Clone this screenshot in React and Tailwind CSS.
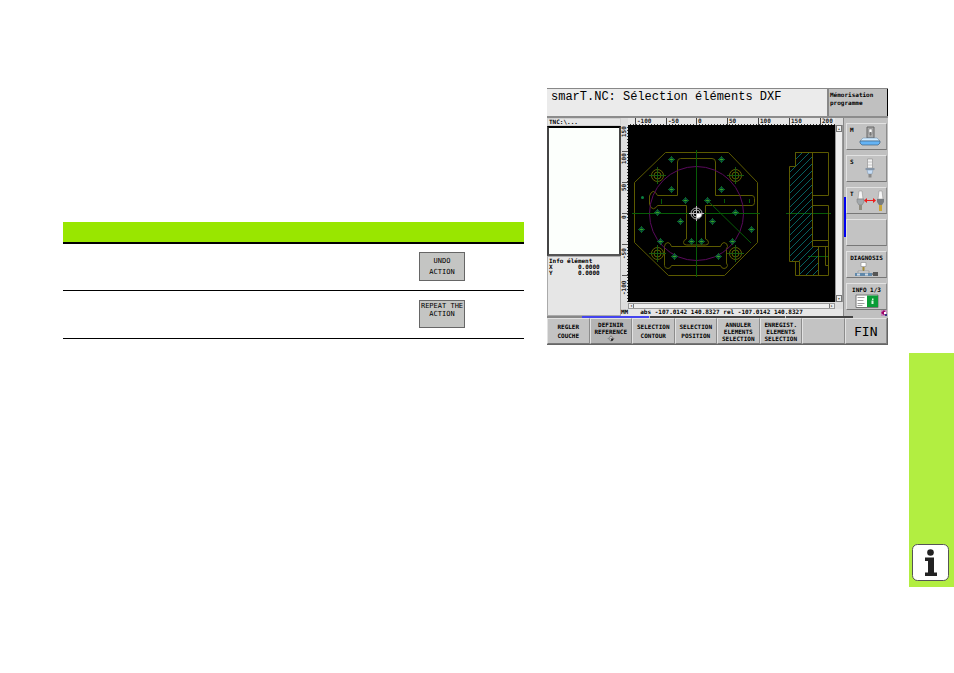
import React from 'react';
import clsx from 'clsx';

// --- Data ---

const SOFTKEYS = [
  { lines: ['REGLER', 'COUCHE'] },
  { lines: ['DEFINIR', 'REFERENCE'], icon: true, active: true },
  { lines: ['SELECTION', 'CONTOUR'] },
  { lines: ['SELECTION', 'POSITION'] },
  { lines: ['ANNULER', 'ELEMENTS', 'SELECTION'] },
  { lines: ['ENREGIST.', 'ELEMENTS', 'SELECTION'] },
  { lines: [] },
  { lines: ['FIN'], large: true },
];

const HOLES = [
  [671, 159], [721, 159], [671, 189], [721, 189], [685, 200], [707, 200],
  [657, 212], [735, 212], [680, 221], [712, 221], [641, 229], [751, 229],
  [660, 241], [732, 241], [691, 241], [701, 241], [674, 256], [718, 256],
];

const BORES = [[657, 175], [735, 175], [657, 253], [735, 253]];

const H_LABELS = [[636, '-100'], [667, '-50'], [697, '0'], [728, '50'], [759, '100'], [790, '150'], [821, '200']];
const V_LABELS = [[137, '150'], [164, '100'], [191, '50'], [219, '0'], [259, '-50'], [295, '-100']];

const range = (start, end, step) => {
  const list = [];
  for (let n = start; n < end; n += step) list.push(n);
  return list;
};

// --- Drawing ---

const HorizontalRuler = () => (
  <svg viewBox="628 118 207 7" className="block h-[7px] min-w-0 flex-1 bg-[#e6e6e6]" preserveAspectRatio="none">
    {range(630, 835, 3).map((x) => (
      <path key={x} d={`M${x}.5 124v1`} stroke="#333" />
    ))}
    {H_LABELS.map(([x, label]) => (
      <g key={label}>
        <path d={`M${x - 1}.5 118v7`} stroke="#444" />
        <text x={x + 1} y="123" fontSize="6" fontWeight="bold" fill="#222" fontFamily="DejaVu Sans Mono, monospace">{label}</text>
      </g>
    ))}
  </svg>
);

const VerticalRuler = () => (
  <svg viewBox="621 125 7 177" className="block w-[7px] shrink-0 bg-[#e0e0e0]" preserveAspectRatio="none">
    {range(127, 302, 3).map((y) => (
      <path key={y} d={`M627 ${y}.5h1`} stroke="#333" />
    ))}
    {[151, 182, 213, 244, 275].map((y) => (
      <path key={y} d={`M622 ${y}.5h6`} stroke="#555" />
    ))}
    {V_LABELS.map(([y, label]) => (
      <text key={label} transform={`translate(626 ${y}) rotate(-90)`} fontSize="6" fontWeight="bold" fill="#222" fontFamily="DejaVu Sans Mono, monospace">{label}</text>
    ))}
  </svg>
);

const Drawing = () => (
  <svg viewBox="628 125 207 177" className="block min-w-0 flex-1 bg-black" fill="none">
    <defs>
      <clipPath id="section">
        <path d="M795 152h17v94h6v29h-19v-14h-10v-95h6z" />
      </clipPath>
    </defs>

    {/* plate outline */}
    <g stroke="#5c5a00">
      <path d="M665.500 152.500H728.500L757.500 182.500V242.500L724.500 275.500H668.500L634.500 242.500V182.500Z" />
      <path d="M677.500 195.500V162q0-3.500 3-3.500h31.500q3.500 0 3.500 3.500v33.500h36.500q2.500 0 2.500 3v4q0 3-2.500 3h-46.500v33.500q3 1 3 3.500t-3 2.500h-19q-3 0-3-2.500t3-3.500v-33.500H657.500L656 207.500Q653.500 210 651 207.500L649.500 204V196L651 193Q653 190 655.500 192.500L657.500 195.500Z" />
      <path d="M671.500 246.500H720.500Q721.500 243 724 242.500Q727.500 243 727.500 246.500L726.500 249V263L727.500 265.500Q727 268.500 724 268.500Q721.500 268.500 720.500 265.500H671.500Q670.500 268.500 668 268.500Q664.500 268.500 664.500 265.500V246.500Q664.500 243 668 242.500Q670.500 243 671.500 246.500Z" />
    </g>
    <circle cx="696.5" cy="213.500" r="47" stroke="#5a0a5c" />

    {BORES.map(([x, y]) => (
      <g key={`${x}-${y}`}>
        <circle cx={x + 0.5} cy={y + 0.5} r="6" stroke="#626000" />
        <circle cx={x + 0.5} cy={y + 0.5} r="3.500" stroke="#626000" />
        <path d={`M${x - 8} ${y}.5h17M${x}.5 ${y - 8}v17`} stroke="#185c10" />
      </g>
    ))}

    {/* axes */}
    <path d="M632 213.500h128M696.500 150v127M786 213.500h45M808 256.500h20M707 200L751 243" stroke="#075c07" />
    <path d="M661.500 199v5M724.500 199v4M749.500 199v4" stroke="#075c07" />

    {HOLES.map(([x, y]) => (
      <g key={`${x}-${y}`}>
        <circle cx={x + 0.5} cy={y + 0.5} r="2" stroke="#0a7058" />
        <path d={`M${x - 3} ${y}.5h7M${x}.5 ${y - 3}v7`} stroke="#0d6420" />
        <path d={`M${x - 1} ${y}.5h3`} stroke="#389c28" />
      </g>
    ))}
    <circle cx="642.500" cy="197.500" r="1.500" fill="#0a8040" />

    {/* side view */}
    <g clipPath="url(#section)" stroke="#066060">
      {range(155, 325, 7).map((y) => (
        <path key={y} d={`M786 ${y}l40-40`} />
      ))}
    </g>
    <g stroke="#5c5a00">
      <path d="M795.500 152.500H828.500V195.500H812.500M795.500 152.500V166.500H789.500V261.500H799.500V275.500M795.500 261.500V275.500H828.500V205.500H812.500" />
      <path d="M812.500 152.500V246.500H828.500M812.500 240.500h16M818.500 246.500V275.500M825.500 246.500V265.500h3" />
    </g>

    {/* reference point */}
    <g stroke="#bbb">
      <circle cx="696.500" cy="213.500" r="5.500" />
      <circle cx="696.500" cy="213.500" r="3.500" />
      <path d="M689 213.500h15M696.500 206v15" />
    </g>
    <path d="M697 214h4.500q0 4-4.500 4z" fill="#fff" />
  </svg>
);

// --- Icons of the machine keys ---

const TableIcon = () => (
  <svg viewBox="0 0 22 20" className="h-5 w-[22px] shrink-0">
    <path d="M8 1h7v11H8z" fill="#aaa" stroke="#666" />
    <path d="M10 3h3v5h-3z" fill="#fff" stroke="#777" strokeWidth=".5" />
    <path d="M10.500 6h2v2l-1 2-1-2z" fill="#777" />
    <path d="M4 12h14l3 3H1z" fill="#d2ecff" stroke="#6385a5" strokeWidth=".5" />
    <path d="M1 15h20v2l-2 2H3l-2-2z" fill="#64b3f5" stroke="#44627e" strokeWidth=".7" />
  </svg>
);

const SpindleIcon = () => (
  <svg viewBox="0 0 10 20" className="h-5 w-[10px] shrink-0">
    <path d="M2.500 1h5v9h-5z" fill="#f4f4f4" stroke="#888" strokeWidth=".6" />
    <path d="M2.500 4h5M2.500 7h5" stroke="#aaa" strokeWidth=".6" />
    <path d="M.5 10h9v2h-9z" fill="#8896a6" />
    <path d="M2 12h6l-1 4H3z" fill="#c7ddf5" stroke="#7890aa" strokeWidth=".5" />
    <path d="M3.500 16h3v3.500h-3z" fill="#888" />
  </svg>
);

const ToolChangeIcon = () => (
  <svg viewBox="0 0 30 22" className="h-[22px] w-[30px] shrink-0">
    <path d="M4 1h3l1 8H3z" fill="#f5f5f5" stroke="#888" strokeWidth=".5" />
    <path d="M2 9h7v3L7 15H4l-2-3z" fill="#a2a8ac" stroke="#777" strokeWidth=".5" />
    <path d="M4 15h3v5H4z" fill="#918d80" />
    <path d="M11 10.500h8" stroke="#ed1c1c" />
    <path d="M9 10.500l3-2.500v5zM21 10.500L18 8v5z" fill="#ed1c1c" />
    <path d="M24 1h3l1 8h-5z" fill="#f5f5f5" stroke="#888" strokeWidth=".5" />
    <path d="M22 9h7v3l-2 3h-3l-2-3z" fill="#777c80" />
    <path d="M24 15h3v6h-3z" fill="#c9a638" />
  </svg>
);

const DiagnosisIcon = () => (
  <svg viewBox="0 0 26 15" className="h-[15px] w-[26px] shrink-0">
    <path d="M7 .5h5v4H7z" fill="#fff" stroke="#888" strokeWidth=".6" />
    <path d="M8.500 5h2v3l-1 2-1-2z" fill="#a48c35" />
    <path d="M4 9h11v2H4z" fill="#ddd" stroke="#777" strokeWidth=".5" />
    <path d="M1 11h17v3H1z" fill="#6088aa" />
    <path d="M3 11.500h3v2H3zM11 11.500h3v2h-3z" fill="#cfd9e3" />
    <path d="M18 12h2" stroke="#444" />
    <path d="M19 10h5v4h-5z" fill="#555" />
  </svg>
);

const InfoIcon = () => (
  <svg viewBox="0 0 24 15" className="h-[15px] w-6 shrink-0">
    <path d="M1 1h22v12.500H1z" fill="#fff" stroke="#777" />
    <path d="M2.500 3.500h7M2.500 6.500h6M2.500 9.500h7M2.500 11.500h5" stroke="#888" strokeWidth=".8" />
    <path d="M12 1.500h11V13H12z" fill="#0a9c36" />
    <path d="M17 4.500h1.500V6H17zM16.500 6.500h2v3.500h-2z" fill="#d8f5dd" />
  </svg>
);

const ReferenceIcon = () => (
  <svg viewBox="0 0 8 7" className="h-[7px] w-2 shrink-0">
    <circle cx="4" cy="3.500" r="2" fill="#eee" stroke="#666" strokeWidth=".7" />
    <path d="M4 3.500h2.500Q6.500 6 4 6z" fill="#111" />
    <path d="M.5 3.500h7M4 0v7" stroke="#777" strokeWidth=".5" />
  </svg>
);

// --- Parts of the control screen ---

const keyStyle = 'border border-t-[#e2e2e2] border-l-[#e2e2e2] border-r-[#8c8c8c] border-b-[#777]';

const MachineKey = ({ label, title, wide, children }) => (
  <button
    type="button"
    aria-label={title}
    className={clsx(
      'flex h-[27px] w-full shrink-0 bg-[#c3c3c3] pt-[2px] text-[6px] leading-[8px]',
      wide ? 'flex-col items-center' : 'items-start pl-[3px]',
      keyStyle,
    )}
  >
    {label && <span className="whitespace-nowrap">{label}</span>}
    {children && <span className={clsx('flex justify-center', wide ? 'shrink-0' : 'flex-1')}>{children}</span>}
  </button>
);

const Softkey = ({ lines, icon, active, large }) => (
  <button
    type="button"
    aria-label={lines.join(' ') || 'Softkey'}
    className={clsx(
      'flex h-[26px] min-w-0 flex-col items-center justify-center',
      large ? 'pt-[2px] text-[13px] leading-[14px] font-normal' : 'text-[6px]',
      !large && (lines.length === 2 && !icon ? 'leading-[9px]' : 'leading-[7px]'),
      keyStyle,
      active ? 'bg-[#b4b4b4]' : 'bg-[#c3c3c3]',
    )}
  >
    {lines.map((line) => (
      <span key={line}>{line}</span>
    ))}
    {icon && <ReferenceIcon />}
  </button>
);

const ControlScreen = () => (
  <section className="bg-[#c0c0c0] font-['DejaVu_Sans_Mono',monospace] font-bold text-black">
    <header className="flex h-[30px] border-t border-b-2 border-t-[#888] border-b-[#8c8c8c] bg-[#ebebeb]">
      <h1 className="flex-1 pt-[1px] pl-1 font-['Liberation_Mono',monospace] text-[12px] leading-[14px] font-normal whitespace-nowrap">smarT.NC: Sélection éléments DXF</h1>
      <p className="w-[61px] border-r border-l-2 border-r-black border-l-[#888] bg-[#c0c0c0] pt-[2px] pl-[1px] text-[6px] leading-[8px]">
        Mémorisation
        <br />
        programme
      </p>
    </header>

    <div className="flex">
      <div className="flex w-[74px] shrink-0 flex-col bg-[#e6e6e6] text-[6px] leading-[6px]">
        <p className="h-2 border border-[#d0d0d0] pl-[1px]">TNC:\...</p>
        <div className="h-[130px] border-2 border-r-[#444] border-b-[#555] border-t-black border-l-[#444] bg-[#fcfffc]" />
        <div className="flex-1 border border-[#aaa] pt-[1px] pl-[1px]">
          <p>Info élément</p>
          <dl className="grid grid-cols-[29px_1fr]">
            <dt>X</dt>
            <dd>0.0000</dd>
            <dt>Y</dt>
            <dd>0.0000</dd>
          </dl>
        </div>
      </div>

      <div className="flex min-w-0 flex-1 flex-col">
        <div className="flex">
          <div className="w-[7px] shrink-0 bg-[#ddd]" />
          <HorizontalRuler />
          <div className="w-2 shrink-0 bg-[#ddd]" />
        </div>
        <div className="flex">
          <VerticalRuler />
          <Drawing />
          <div className="flex w-2 shrink-0 flex-col justify-between border-x border-[#999] bg-[#eee] text-center text-[4px] leading-[5px]">
            <span className="border border-[#777]">▴</span>
            <span className="border border-[#777]">▾</span>
          </div>
        </div>
        <div className="flex h-[7px] bg-[#ddd] pr-2 pl-[7px]">
          <div className="mt-[1px] flex flex-1 justify-between border border-[#999] bg-[#eee] text-[4px] leading-[4px]">
            <span className="border-r border-[#777] px-[1px]">◂</span>
            <span className="border-l border-[#777] px-[1px]">▸</span>
          </div>
        </div>
        <p className="flex h-[7px] gap-3 bg-[#e6e6e6] text-[6px] leading-[6px] whitespace-nowrap">
          <span>MM</span>
          <span>abs -107.0142 140.8327 rel -107.0142 140.8327</span>
        </p>
      </div>

      <div className="flex w-[45px] shrink-0 bg-[#c0c0c0] pr-[1px]">
        <div className="flex w-[3px] shrink-0 border-l border-[#888] pt-[79px]">
          <div className="h-10 w-[2px] bg-[#0000f0]" />
        </div>
        <div className="flex flex-1 flex-col gap-[5px] pt-[5px]">
          <MachineKey label="M" title="Machine"><TableIcon /></MachineKey>
          <MachineKey label="S" title="Spindle"><SpindleIcon /></MachineKey>
          <MachineKey label="T" title="Tool"><ToolChangeIcon /></MachineKey>
          <MachineKey title="Free key" />
          <MachineKey label="DIAGNOSIS" wide><DiagnosisIcon /></MachineKey>
          <MachineKey label="INFO 1/3" wide><InfoIcon /></MachineKey>
        </div>
      </div>
    </div>

    <div className="grid grid-cols-[35fr_67fr_1fr_135fr_1fr_67fr_35fr]">
      <div className="h-[2px] bg-[#888]" />
      <div className="h-[2px] bg-[#4444ee]" />
      <div />
      <div className="h-[2px] bg-[#444]" />
      <div />
      <div className="h-[2px] bg-[#444]" />
      <div className="relative">
        <svg viewBox="0 0 6 6" className="absolute right-[1px] bottom-[2px] h-[6px] w-[6px]">
          <path d="M0 0h6v6H0z" fill="#bf8bb9" />
          <path d="M0 3l3-3 2 3-2 2z" fill="#a00068" />
          <path d="M3 2h2v2H3z" fill="#fff" />
          <path d="M4 4h2v2H4z" fill="#353584" />
        </svg>
      </div>
    </div>
    <nav className="grid grid-cols-8 border-r border-b border-[#666]">
      {SOFTKEYS.map((key, index) => (
        <Softkey key={index} {...key} />
      ))}
    </nav>
  </section>
);

// --- Manual page ---

const PrintedKey = ({ lines, spread }) => (
  <button
    type="button"
    className={clsx(
      "block w-[46px] border border-[#666] bg-[#c4c5c3] text-center font-['DejaVu_Sans_Mono',monospace] text-[7px]",
      spread ? 'h-[29px] leading-[11px]' : 'h-7 pb-[9px] leading-[8px]',
    )}
  >
    {lines.map((line) => (
      <span key={line} className="block whitespace-nowrap">{line}</span>
    ))}
  </button>
);

const FunctionTable = () => (
  <table className="w-full table-fixed border-collapse">
    <thead>
      <tr className="h-[21px] border-b-2 border-black bg-[#99e600]">
        <th scope="col" className="w-[356px]" aria-label="Function" />
        <th scope="col" aria-label="Softkey" />
      </tr>
    </thead>
    <tbody>
      <tr className="h-[47px] border-b border-black">
        <td />
        <td className="p-0"><PrintedKey lines={['UNDO', 'ACTION']} spread /></td>
      </tr>
      <tr className="h-12 border-b border-black">
        <td />
        <td className="p-0"><PrintedKey lines={['REPEAT THE', 'ACTION']} /></td>
      </tr>
    </tbody>
  </table>
);

const InfoTab = () => (
  <aside className="mt-[353px] flex h-[234px] w-[45px] shrink-0 items-end justify-center bg-[#b2ee41] pr-[2px] pb-[6px]">
    <svg viewBox="0 0 37 37" className="h-[37px] w-[37px]" role="img" aria-label="Information">
      <rect x=".5" y=".5" width="36" height="36" rx="5" fill="#fff" stroke="#555" />
      <circle cx="18.500" cy="8.500" r="3.300" fill="#222" />
      <path d="M13 13.500h9V28.500h3V32H13v-3.500h3V17h-3z" fill="#222" />
    </svg>
  </aside>
);

function App() {
  return (
    <div className="flex min-h-screen bg-white">
      <main className="grid min-w-0 flex-1 grid-cols-[461fr_341fr] items-start gap-[23px] pt-[88px] pr-[21px] pl-[63px]">
        <div className="pt-[134px]">
          <FunctionTable />
        </div>
        <ControlScreen />
      </main>
      <InfoTab />
    </div>
  );
}

export default App;
